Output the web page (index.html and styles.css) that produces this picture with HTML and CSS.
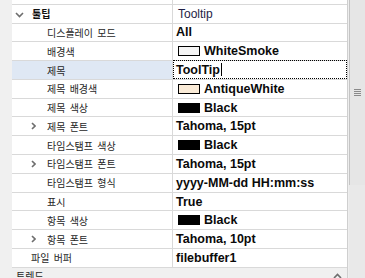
FILE: index.html
```html
<!DOCTYPE html>
<html>
  <head>
    <meta charset="utf-8" />
    <title>속성</title>
    <link rel="stylesheet" href="styles.css">
  </head>
  <body>
    <div class="grid">
      <div class="main">
        <div class="rows">
          <div class="row stub"><div class="name"></div><div class="value"></div></div>
          <div class="row cat">
            <div class="name lv0"><svg class="chev" width="9" height="6" viewBox="0 0 9 6"><path d="M1 1 L4.5 4.5 L8 1" /></svg>툴팁</div>
            <div class="value plain">Tooltip</div>
          </div>
          <div class="row"><div class="name lv2">디스플레이 모드</div><div class="value">All</div></div>
          <div class="row"><div class="name lv2">배경색</div><div class="value"><span class="swatch" style="background:#f5f5f5"></span>WhiteSmoke</div></div>
          <div class="row selected"><div class="name lv2">제목</div><div class="value edit">ToolTip<span class="caret"></span></div></div>
          <div class="row"><div class="name lv2">제목 배경색</div><div class="value"><span class="swatch" style="background:#faebd7"></span>AntiqueWhite</div></div>
          <div class="row"><div class="name lv2">제목 색상</div><div class="value"><span class="swatch" style="background:#000"></span>Black</div></div>
          <div class="row">
            <div class="name lv2"><svg class="arrow" width="5" height="8" viewBox="0 0 5 8"><path d="M1 1 L4 4 L1 7" /></svg>제목 폰트</div>
            <div class="value">Tahoma, 15pt</div>
          </div>
          <div class="row"><div class="name lv2">타임스탬프 색상</div><div class="value"><span class="swatch" style="background:#000"></span>Black</div></div>
          <div class="row">
            <div class="name lv2"><svg class="arrow" width="5" height="8" viewBox="0 0 5 8"><path d="M1 1 L4 4 L1 7" /></svg>타임스탬프 폰트</div>
            <div class="value">Tahoma, 15pt</div>
          </div>
          <div class="row"><div class="name lv2">타임스탬프 형식</div><div class="value">yyyy-MM-dd HH:mm:ss</div></div>
          <div class="row"><div class="name lv2">표시</div><div class="value">True</div></div>
          <div class="row"><div class="name lv2">항목 색상</div><div class="value"><span class="swatch" style="background:#000"></span>Black</div></div>
          <div class="row">
            <div class="name lv2"><svg class="arrow" width="5" height="8" viewBox="0 0 5 8"><path d="M1 1 L4 4 L1 7" /></svg>항목 폰트</div>
            <div class="value">Tahoma, 10pt</div>
          </div>
          <div class="row"><div class="name lv1">파일 버퍼</div><div class="value">filebuffer1</div></div>
        </div>
        <div class="cat-bottom">
          <span>트렌드</span>
          <svg class="up" width="9" height="6" viewBox="0 0 9 6"><path d="M1 5 L4.5 1.5 L8 5" /></svg>
        </div>
      </div>
      <div class="scrollbar">
        <div class="thumb"><div class="grip"><i></i><i></i><i></i><i></i></div></div>
      </div>
    </div>
  </body>
</html>
```

FILE: styles.css
```css
body {
  margin: 0;
  width: 365px;
  height: 278px;
  overflow: hidden;
  background: #fff;
}
.grid {
  display: flex;
  height: 278px;
}
.main {
  width: 349px;
  display: flex;
  flex-direction: column;
}
.rows {
  border-left: 12px solid #f0f0f0;
  border-right: 1px solid #cfcfcf;
  background: #fff;
}
.row {
  display: flex;
  height: 18.79px;
  box-sizing: border-box;
  border-bottom: 1px solid #d9d9d9;
}
.row.stub {
  height: 5px;
  margin-top: -0.21px;
}
.name {
  width: 161px;
  flex: none;
  box-sizing: border-box;
  border-right: 1px solid #d9d9d9;
  display: flex;
  align-items: center;
  font-family: "Noto Sans CJK KR", sans-serif;
  font-size: 10px;
  word-spacing: 2px;
  color: #262626;
  position: relative;
}
.name.lv0 {
  padding-left: 20px;
  font-weight: bold;
  color: #111;
}
.name.lv1 {
  padding-left: 19px;
}
.name.lv2 {
  padding-left: 35px;
}
.selected .name {
  background: #dfe8f4;
}
.chev {
  position: absolute;
  left: 3px;
  top: 7px;
  fill: none;
  stroke: #6e6e6e;
  stroke-width: 1.6;
}
.arrow {
  position: absolute;
  left: 19px;
  top: 5px;
  fill: none;
  stroke: #6e6e6e;
  stroke-width: 1.6;
}
.value {
  flex: 1;
  display: flex;
  align-items: center;
  padding-left: 3px;
  font-family: "Liberation Sans", Arial, sans-serif;
  font-size: 12.5px;
  font-weight: bold;
  color: #0a0a0a;
  white-space: nowrap;
}
.value.plain {
  padding-left: 5px;
  font-size: 12px;
  font-weight: normal;
  color: #1e1e46;
}
.value.edit {
  border: 1px dotted #000;
  margin-top: -1px;
  padding-left: 2px;
}
.caret {
  display: inline-block;
  width: 1px;
  height: 13px;
  background: #000;
  margin-left: 1px;
}
.swatch {
  display: inline-block;
  width: 22px;
  height: 10px;
  box-sizing: border-box;
  border: 1px solid #000;
  margin-left: 2px;
  margin-right: 4px;
}
.cat-bottom {
  flex: 1;
  background: #f0f0f0;
  border-right: 1px solid #cfcfcf;
  position: relative;
  font-family: "Noto Sans CJK KR", sans-serif;
  font-size: 10px;
  color: #262626;
  padding-left: 16px;
  line-height: 16px;
}
.up {
  position: absolute;
  left: 333px;
  top: 5px;
  fill: none;
  stroke: #6e6e6e;
  stroke-width: 1.6;
}
.scrollbar {
  width: 16px;
  background: #e9e9e9;
  border-left: 1px solid #eeeeee;
}
.thumb {
  height: 185px;
  border-left: 1px solid #c4c4c4;
  background: #e6e6e6;
  display: flex;
  justify-content: center;
  align-items: center;
}
.grip {
  display: flex;
  flex-direction: column;
  gap: 1px;
}
.grip i {
  display: block;
  width: 7px;
  height: 1px;
  background: #8a8a8a;
}
```
